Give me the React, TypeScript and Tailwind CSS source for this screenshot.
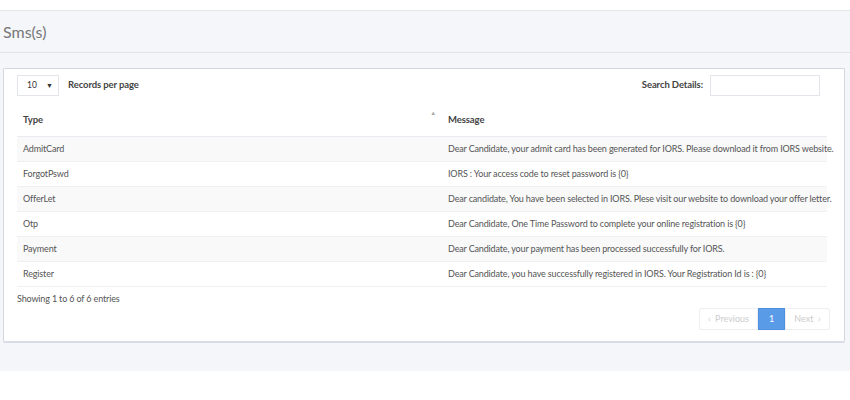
import React from "react";

const rows: [string, string][] = [
  ["AdmitCard", "Dear Candidate, your admit card has been generated for IORS. Please download it from IORS website."],
  ["ForgotPswd", "IORS : Your access code to reset password is {0}"],
  ["OfferLet", "Dear candidate, You have been selected in IORS. Plese visit our website to download your offer letter."],
  ["Otp", "Dear Candidate, One Time Password to complete your online registration is {0}"],
  ["Payment", "Dear Candidate, your payment has been processed successfully for IORS."],
  ["Register", "Dear Candidate, you have successfully registered in IORS. Your Registration Id is : {0}"],
];

export default function App() {
  return (
    <div
      className="w-[850px] h-[400px] bg-white overflow-hidden text-[#555]"
      style={{ fontFamily: "Lato, 'Open Sans', sans-serif" }}
    >
      <div className="h-[10px]" />
      <div className="bg-[#f4f6f9] border-t border-[#e3e6eb]">
        <div className="h-[42px] flex items-center pl-[3px] text-[16px] text-[#777] border-b border-[#e0e3e8]">
          Sms(s)
        </div>
        <div className="pt-[15px] pb-[28px] pl-[3px] pr-[5px]">
          <div className="bg-white border border-[#d2d6de] border-b-2 border-b-[#d9dde3] rounded-[2px] px-[13px] pt-[6px] pb-[11px]">
            <div className="flex items-center justify-between h-[21px]">
              <div className="flex items-center">
                <div className="w-[42px] h-[21px] border border-[#e2e5ea] flex items-center justify-between pl-[9px] pr-[5px] text-[8.5px] text-[#333]">
                  <span>10</span>
                  <span className="text-[7px]">▼</span>
                </div>
                <span className="ml-[9px] text-[9.5px] font-bold text-[#444] tracking-[-0.1px]">Records per page</span>
              </div>
              <div className="flex items-center mr-[11px]">
                <span className="text-[9.5px] font-bold text-[#444] tracking-[-0.1px]">Search Details:</span>
                <div className="ml-[7px] w-[110px] h-[21px] border border-[#e2e5ea]" />
              </div>
            </div>
            <div className="mt-[7px] mr-[4px] text-[9px] tracking-[-0.15px]">
              <div className="flex h-[34px] items-end border-b border-[#e8ebef]">
                <div className="w-[425px] shrink-0 relative pl-[6px] pb-[9px] font-bold text-[#444] text-[9.5px] tracking-[-0.1px]">
                  Type
                  <span className="absolute right-[6px] top-[-5px] text-[6px] text-[#aaa]">▲</span>
                </div>
                <div className="pl-[6px] pb-[9px] font-bold text-[#444] text-[9.5px] tracking-[-0.1px]">Message</div>
              </div>
              {rows.map(([t, m], i) => (
                <div
                  key={t}
                  className={`flex h-[25px] items-center border-b border-[#eef0f3] ${i % 2 === 0 ? "bg-[#f9f9fa]" : "bg-white"}`}
                >
                  <div className="w-[425px] shrink-0 pl-[6px]">{t}</div>
                  <div className="pl-[6px] whitespace-nowrap">{m}</div>
                </div>
              ))}
            </div>
            <div className="mt-[5px] text-[9px] tracking-[-0.15px]">Showing 1 to 6 of 6 entries</div>
            <div className="flex justify-end mr-[1px] mt-[2px]">
              <div className="flex h-[22px] text-[9px]">
                <div className="w-[59px] border border-[#eceef1] rounded-l-[2px] flex items-center justify-center text-[#ccc]">
                  ‹&nbsp; Previous
                </div>
                <div className="w-[27px] bg-[#5a9be8] border border-[#4e8fe0] flex items-center justify-center text-white">
                  1
                </div>
                <div className="w-[45px] border border-[#eceef1] rounded-r-[2px] flex items-center justify-center text-[#ccc]">
                  Next &nbsp;›
                </div>
              </div>
            </div>
          </div>
        </div>
      </div>
    </div>
  );
}
